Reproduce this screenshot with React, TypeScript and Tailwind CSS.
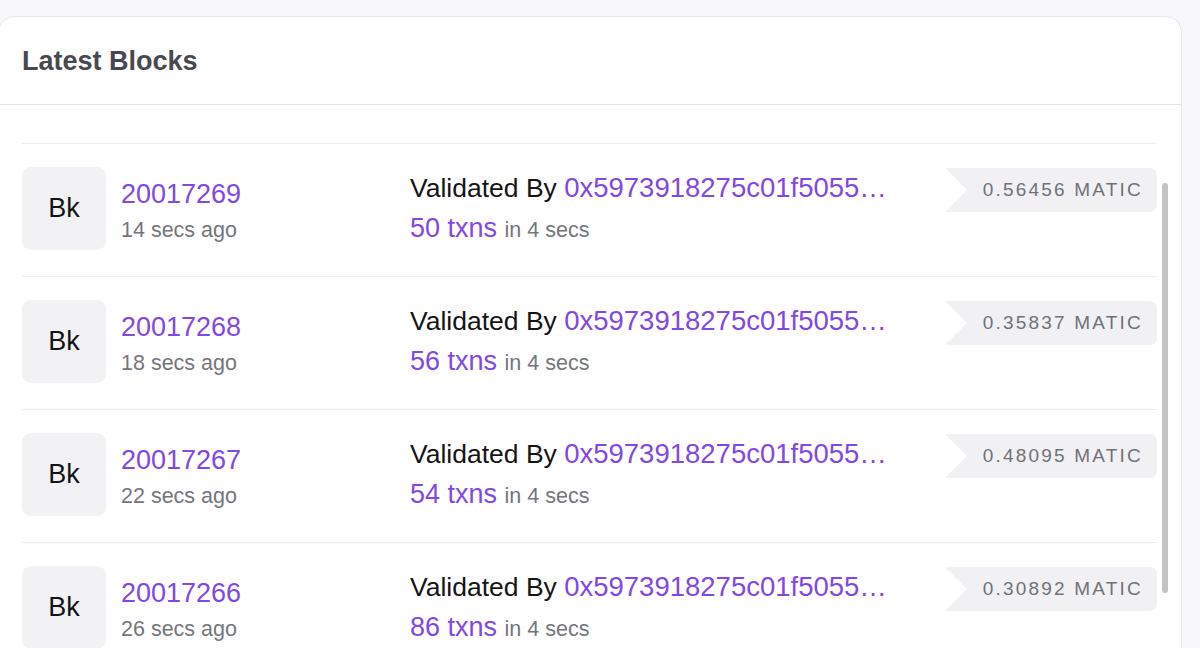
import React from "react";

const rows = [
  { n: "20017269", ago: "14 secs ago", tx: "50 txns", fee: "0.56456 MATIC" },
  { n: "20017268", ago: "18 secs ago", tx: "56 txns", fee: "0.35837 MATIC" },
  { n: "20017267", ago: "22 secs ago", tx: "54 txns", fee: "0.48095 MATIC" },
  { n: "20017266", ago: "26 secs ago", tx: "86 txns", fee: "0.30892 MATIC" },
];

export default function App() {
  return (
    <div
      className="h-[648px] w-full overflow-hidden bg-[#f8f8fa] pt-[16px]"
      style={{ fontFamily: '"Liberation Sans", Arial, sans-serif' }}
    >
      <div className="-ml-[2px] w-[1184px] h-[700px] rounded-[16px] border border-[#e6e6ee] bg-white overflow-hidden">
        <div className="flex h-[88px] items-center border-b border-[#e3e3ea] pl-[23px]">
          <h2 className="text-[27px] leading-[32px] font-bold text-[#48494e]">Latest Blocks</h2>
        </div>
        <div className="flex">
          <div className="flex-1 pl-[23px]">
            <div className="h-[38px]" />
            {rows.map((r) => (
              <div key={r.n} className="flex h-[133px] items-start border-t border-[#ececf1] pt-[23px]">
                <div className="flex h-[83px] w-[84px] shrink-0 items-center justify-center rounded-[9px] bg-[#f2f2f4] text-[27px] text-[#141414]">
                  Bk
                </div>
                <div className="ml-[15px] w-[289px] shrink-0 pt-[12px]">
                  <div className="text-[27px] leading-[30px] text-[#8247e5]">{r.n}</div>
                  <div className="mt-[8px] text-[21.5px] leading-[26px] text-[#75767c]">{r.ago}</div>
                </div>
                <div className="flex-1 pt-[6px]">
                  <div className="whitespace-nowrap text-[26.5px] leading-[30px] text-[#151515]">
                    Validated By <span className="text-[27.5px] text-[#8247e5]">0x5973918275c01f5055…</span>
                  </div>
                  <div className="mt-[10px] whitespace-nowrap leading-[30px]">
                    <span className="text-[27px] text-[#8247e5]">{r.tx} </span>
                    <span className="text-[21.5px] text-[#75767c]">in 4 secs</span>
                  </div>
                </div>
                <div
                  className="mt-[1px] flex h-[44px] w-[212px] shrink-0 items-center justify-end rounded-r-[7px] bg-[#f1f1f4] pr-[14px] text-[19px] tracking-[2.2px] text-[#707178]"
                  style={{ clipPath: "polygon(0 0, 100% 0, 100% 100%, 0 100%, 22px 50%)" }}
                >
                  {r.fee}
                </div>
              </div>
            ))}
          </div>
          <div className="w-[24px] shrink-0 pl-[5px]">
            <div className="mt-[78px] h-[410px] w-[6px] rounded-full bg-[#c3c3c3]" />
          </div>
        </div>
      </div>
    </div>
  );
}
